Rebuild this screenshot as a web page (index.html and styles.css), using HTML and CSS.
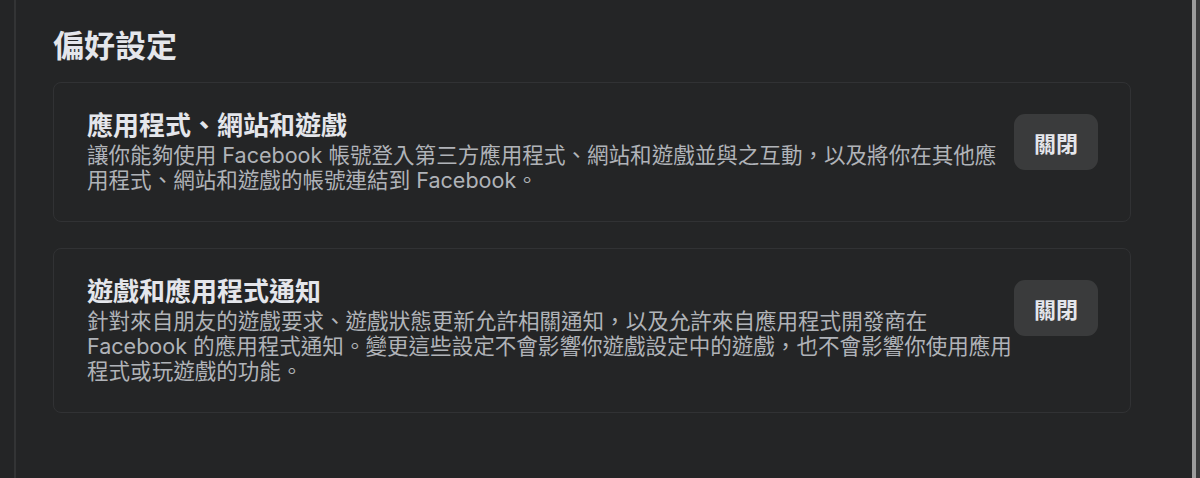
FILE: index.html
```html
<!DOCTYPE html>
<html lang="zh-Hant">
<head>
<meta charset="utf-8">
<title>偏好設定</title>
<link rel="stylesheet" href="styles.css">
</head>
<body>
<div class="page">
  <div class="rail"></div>
  <main class="content">
    <h1 class="heading">偏好設定</h1>
    <section class="setting">
      <div class="setting-text">
        <h2 class="setting-title">應用程式、網站和遊戲</h2>
        <p class="setting-desc">讓你能夠使用 Facebook 帳號登入第三方應用程式、網站和遊戲並與之互動，以及將你在其他應用程式、網站和遊戲的帳號連結到 Facebook。</p>
      </div>
      <button class="setting-btn" type="button">關閉</button>
    </section>
    <section class="setting">
      <div class="setting-text">
        <h2 class="setting-title">遊戲和應用程式通知</h2>
        <p class="setting-desc">針對來自朋友的遊戲要求、遊戲狀態更新允許相關通知，以及允許來自應用程式開發商在 Facebook 的應用程式通知。變更這些設定不會影響你遊戲設定中的遊戲，也不會影響你使用應用程式或玩遊戲的功能。</p>
      </div>
      <button class="setting-btn" type="button">關閉</button>
    </section>
  </main>
  <div class="scrollbar"><div class="scrollbar-thumb"></div></div>
</div>
</body>
</html>
```

FILE: styles.css
```css
html, body {
  margin: 0;
  padding: 0;
  height: 100%;
  background: #242526;
  overflow: hidden;
}

body {
  font-family: Inter, "Noto Sans CJK TC", sans-serif;
  color: #e4e6eb;
}

.page {
  display: flex;
  height: 100vh;
}

.rail {
  width: 14px;
  flex: none;
  border-right: 2px solid #333435;
}

.content {
  flex: 1;
  min-width: 0;
  padding: 27px 61px 0 37px;
  display: flex;
  flex-direction: column;
  gap: 26px;
}

.heading {
  margin: 0 0 -9px;
  font-size: 31px;
  line-height: 38px;
  font-weight: 700;
  color: #e4e6eb;
}

.setting {
  display: flex;
  align-items: flex-start;
  border: 1px solid #313234;
  border-radius: 8px;
  padding: 25px 32px 28px 33px;
}

.setting-text {
  flex: 1;
  min-width: 0;
  padding-right: 2px;
}

.setting-title {
  margin: 0;
  font-size: 26px;
  line-height: 35px;
  font-weight: 700;
  color: #e4e6eb;
}

.setting-desc {
  margin: 0;
  font-size: 21.55px;
  line-height: 25px;
  color: #b0b3b8;
}

.setting-btn {
  flex: none;
  margin-top: 6px;
  width: 84px;
  height: 56px;
  border: 0;
  border-radius: 11px;
  background: #3a3b3c;
  color: #e4e6eb;
  font-family: inherit;
  font-size: 22px;
  font-weight: 700;
  padding: 0;
}

.scrollbar {
  width: 8px;
  flex: none;
  background: #3a3a3b;
}

.scrollbar-thumb {
  width: 4px;
  height: 100%;
  background: #9c9c9c;
}
```
